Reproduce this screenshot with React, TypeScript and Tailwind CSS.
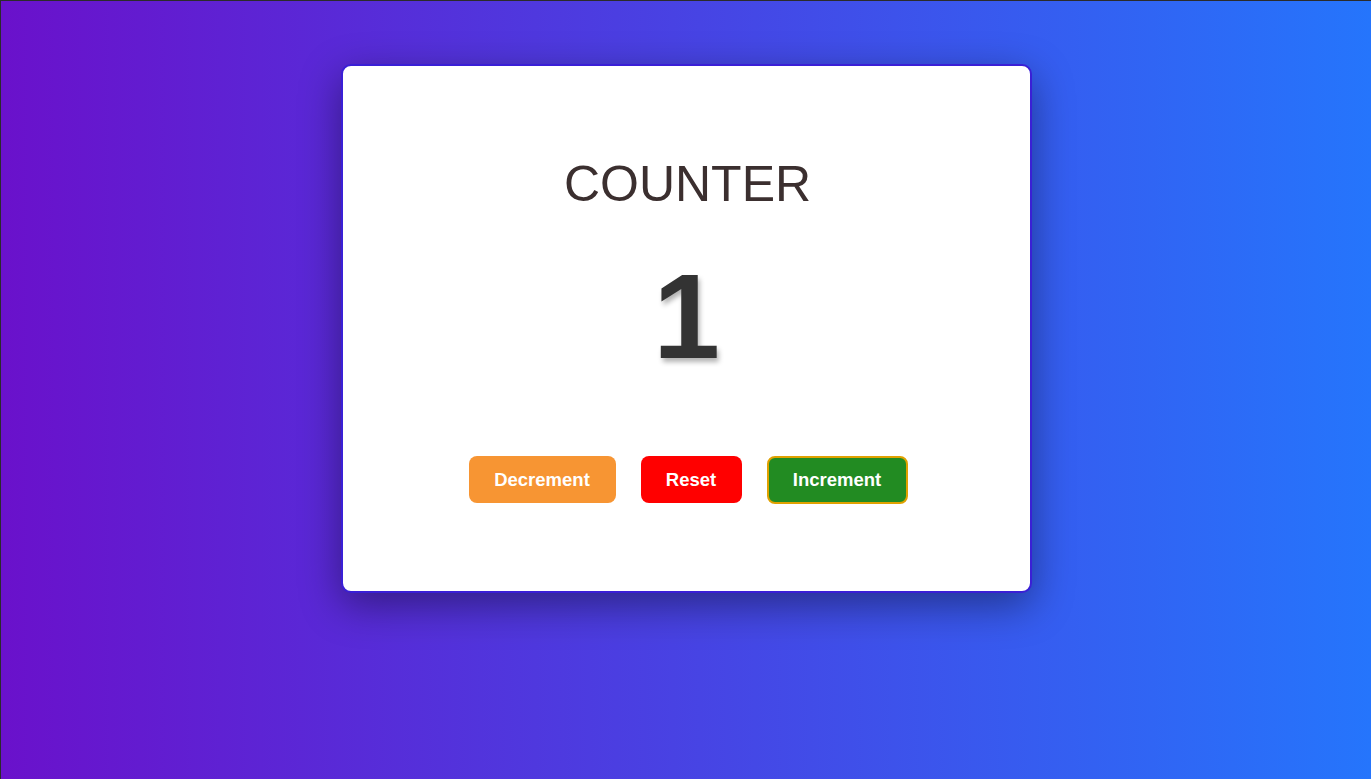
export default function App() {
  return (
    <div className="min-h-[779px] w-full border-t border-l border-[#2b2b2b] bg-[linear-gradient(to_right,#6a11cb,#2575fc)] flex justify-center pt-[63px] pl-[1px] font-['Liberation_Sans',Arial,sans-serif]">
      <div className="w-[691px] h-[529px] bg-white border-2 border-[#3a1fd6] rounded-[10px] shadow-[0_12px_40px_rgba(0,0,0,0.4)] flex flex-col items-center">
        <h1 className="mt-[88px] pl-[2px] text-[50px] leading-[60px] text-[#3b2f2f]">COUNTER</h1>
        <div className="mt-[33px] text-[120px] leading-[138px] font-bold text-[#333] [text-shadow:2px_4px_5px_rgba(0,0,0,0.3)]">1</div>
        <div className="mt-[71px] pl-[3px] flex gap-[25px]">
          <button className="h-[47px] w-[147px] rounded-[8px] bg-[#f79533] text-white font-bold text-[18.5px]">Decrement</button>
          <button className="h-[47px] w-[101px] rounded-[8px] bg-[#ff0000] text-white font-bold text-[18.5px]">Reset</button>
          <button className="h-[48px] w-[141px] rounded-[8px] bg-[#228b22] border-2 border-[#e0a100] text-white font-bold text-[18.5px]">Increment</button>
        </div>
      </div>
    </div>
  );
}
